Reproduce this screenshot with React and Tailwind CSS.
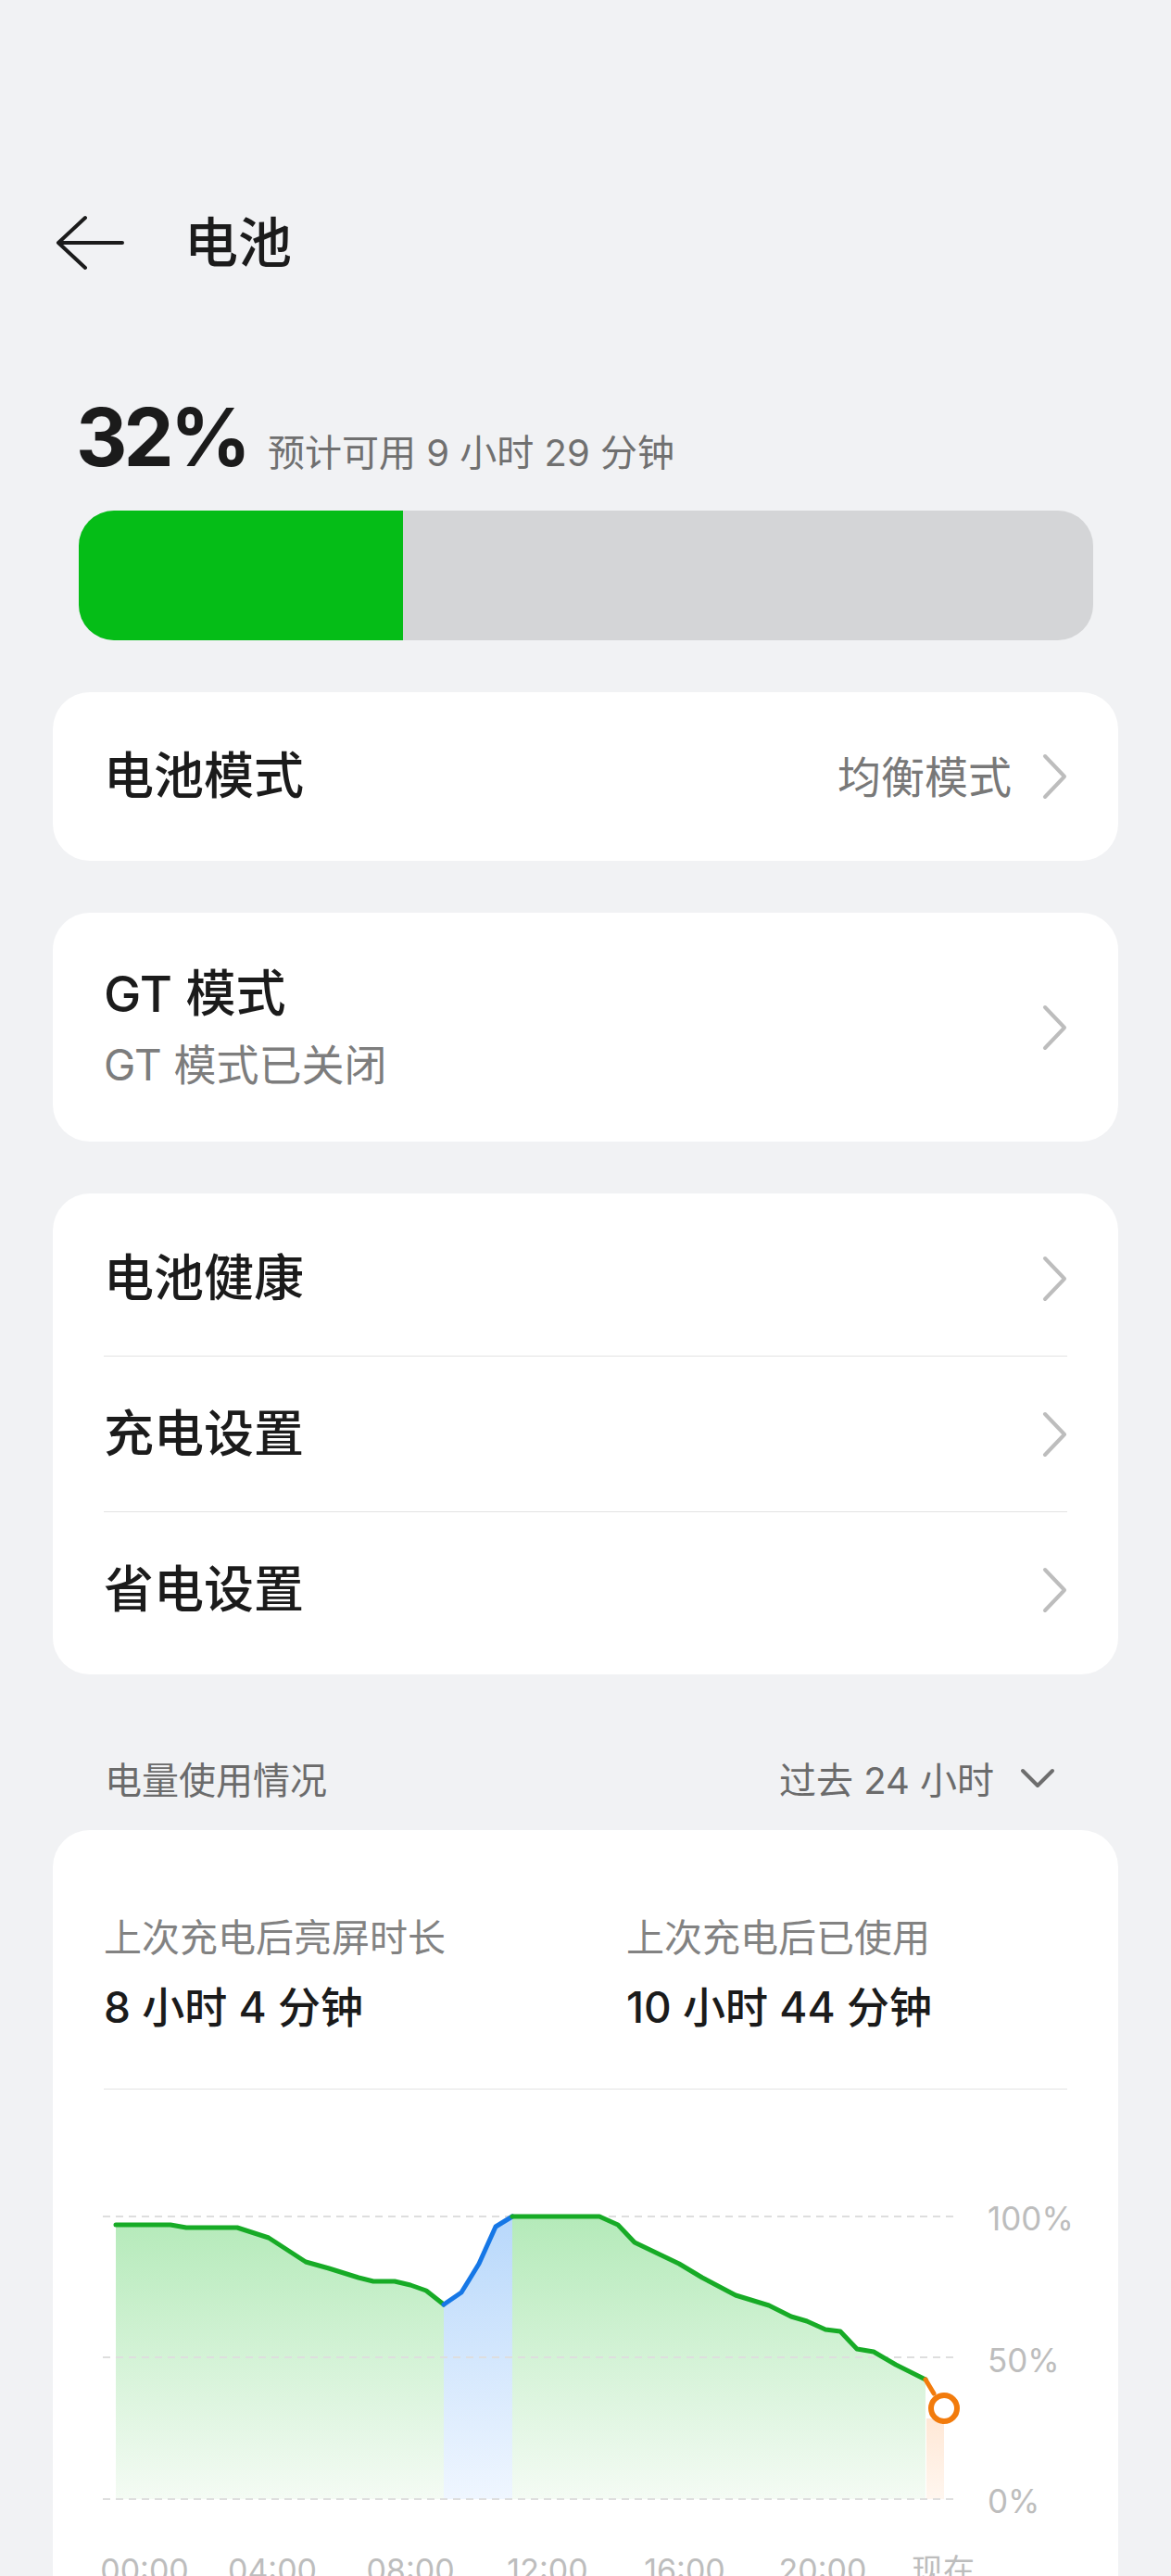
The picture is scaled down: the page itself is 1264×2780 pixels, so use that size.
import React from 'react'

const FONT = "font-['Inter','Noto_Sans_CJK_SC',sans-serif]"

const green1 = [
  [125, 2401], [184, 2401], [201, 2404], [256, 2404], [290, 2415], [330, 2441],
  [355, 2448], [387, 2458], [403, 2462], [426, 2462], [443, 2466], [460, 2472], [479, 2487],
]
const blue = [[479, 2487], [498, 2474], [517, 2443], [535, 2403], [553, 2392]]
const green2 = [
  [553, 2392], [647, 2392], [667, 2401], [685, 2420], [733, 2443], [758, 2458],
  [794, 2477], [830, 2488], [854, 2500], [871, 2505], [891, 2514], [907, 2516],
  [925, 2535], [943, 2538], [967, 2552], [999, 2568],
]

const BASE = 2697
const line = (pts) => pts.map((p) => p.join(',')).join(' ')
const area = (pts) =>
  line([[pts[0][0], BASE], ...pts, [pts[pts.length - 1][0], BASE]])

function Chevron() {
  return (
    <svg width="28" height="50" viewBox="0 0 28 50" fill="none">
      <path d="M4 3 L25 25 L4 47" stroke="#bdbdbd" strokeWidth="4" strokeLinecap="round" strokeLinejoin="round" />
    </svg>
  )
}

function Row({ label }) {
  return (
    <div className="h-[167px] flex items-center justify-between">
      <span className="text-[54px] leading-none font-medium text-[#1b1b1b]">{label}</span>
      <Chevron />
    </div>
  )
}

function Chart() {
  const xLabels = [
    ['00:00', 156], ['04:00', 294], ['08:00', 443], ['12:00', 591],
    ['16:00', 739], ['20:00', 888], ['现在', 1018],
  ]
  return (
    <svg width="1150" height="545" viewBox="57 2255 1150 545" className="block">
      <defs>
        <linearGradient id="g" x1="0" y1="2392" x2="0" y2="2697" gradientUnits="userSpaceOnUse">
          <stop offset="0" stopColor="#b4eab9" />
          <stop offset="1" stopColor="#f4fbf4" />
        </linearGradient>
        <linearGradient id="b" x1="0" y1="2392" x2="0" y2="2697" gradientUnits="userSpaceOnUse">
          <stop offset="0" stopColor="#b8d8fb" />
          <stop offset="1" stopColor="#eff6ff" />
        </linearGradient>
        <linearGradient id="o" x1="0" y1="2610" x2="0" y2="2697" gradientUnits="userSpaceOnUse">
          <stop offset="0" stopColor="#ffe8d6" />
          <stop offset="1" stopColor="#fff6ef" />
        </linearGradient>
      </defs>

      <polygon points={area(green1)} fill="url(#g)" />
      <polygon points={area(blue)} fill="url(#b)" />
      <polygon points={area(green2)} fill="url(#g)" />
      <rect x="1000" y="2610" width="19" height="87" fill="url(#o)" />

      {[2392, 2544, 2697].map((y) => (
        <line key={y} x1="111" y1={y} x2="1032" y2={y} stroke="#dedede" strokeWidth="2" strokeDasharray="8 6" />
      ))}

      <polyline points={line(green1)} fill="none" stroke="#17ab26" strokeWidth="5" strokeLinejoin="round" strokeLinecap="round" />
      <polyline points={line(blue)} fill="none" stroke="#1677e6" strokeWidth="5" strokeLinejoin="round" strokeLinecap="round" />
      <polyline points={line(green2)} fill="none" stroke="#17ab26" strokeWidth="5" strokeLinejoin="round" strokeLinecap="round" />
      <polyline points="999,2568 1008,2583" fill="none" stroke="#f27b0c" strokeWidth="5" strokeLinecap="round" />
      <circle cx="1019" cy="2599" r="14" fill="#fff" stroke="#f27b0c" strokeWidth="6" />

      <g fill="#bdbdbd" fontSize="35" fontFamily="Inter, 'Noto Sans CJK SC', sans-serif">
        <text x="1066" y="2407">100%</text>
        <text x="1066" y="2560">50%</text>
        <text x="1066" y="2712">0%</text>
      </g>
      <g fill="#bdbdbd" fontSize="34" fontFamily="Inter, 'Noto Sans CJK SC', sans-serif" textAnchor="middle">
        {xLabels.map(([t, x]) => (
          <text key={t} x={x} y="2786">{t}</text>
        ))}
      </g>
    </svg>
  )
}

export default function App() {
  return (
    <div className={`${FONT} h-[2780px] overflow-hidden bg-[#f1f2f4] pt-[202px]`}>
      {/* header */}
      <div className="h-[120px] flex items-center pl-[60px]">
        <svg width="76" height="60" viewBox="0 0 76 60" fill="none">
          <path d="M32 3 L3 30 L32 57 M3 30 L72 30" stroke="#1b1b1b" strokeWidth="4" strokeLinecap="round" strokeLinejoin="round" />
        </svg>
        <h1 className="ml-[63px] text-[58px] leading-none font-medium text-[#1b1b1b]">电池</h1>
      </div>

      {/* summary */}
      <div className="mt-[107px] h-[86px] flex items-baseline pl-[82px]">
        <span className="text-[86px] leading-none font-bold tracking-[-4px] text-[#1b1b1b]">32%</span>
        <span className="ml-[22px] text-[40px] leading-none text-[#707070]">预计可用 9 小时 29 分钟</span>
      </div>

      <div className="mt-[36px] ml-[85px] w-[1095px] h-[140px] rounded-[38px] bg-[#d4d5d7] overflow-hidden">
        <div className="h-full w-[32%] bg-[#05bd17]" />
      </div>

      {/* battery mode */}
      <div className="mt-[56px] mx-[57px] h-[182px] rounded-[40px] bg-white px-[55px] flex items-center justify-between">
        <span className="text-[54px] leading-none font-medium text-[#1b1b1b]">电池模式</span>
        <div className="flex items-center gap-[32px]">
          <span className="text-[47px] leading-none text-[#787878]">均衡模式</span>
          <Chevron />
        </div>
      </div>

      {/* GT mode */}
      <div className="mt-[56px] mx-[57px] h-[247px] rounded-[40px] bg-white px-[55px] flex items-center justify-between">
        <div className="flex flex-col gap-[16px]">
          <span className="text-[54px] leading-[64px] font-medium text-[#1b1b1b]">GT 模式</span>
          <span className="text-[46px] leading-[56px] text-[#7d7d7d]">GT 模式已关闭</span>
        </div>
        <Chevron />
      </div>

      {/* settings group */}
      <div className="mt-[56px] mx-[57px] rounded-[40px] bg-white px-[55px] py-[8px]">
        <Row label="电池健康" />
        <div className="h-px bg-[#e3e3e3]" />
        <Row label="充电设置" />
        <div className="h-px bg-[#e3e3e3]" />
        <Row label="省电设置" />
      </div>

      {/* usage header */}
      <div className="mt-[70px] mx-[57px] h-[90px] pl-[56px] pr-[67px] flex items-center justify-between">
        <span className="text-[40px] leading-none text-[#6b6b6b]">电量使用情况</span>
        <div className="flex items-center gap-[27px]">
          <span className="text-[40px] leading-none text-[#6b6b6b]">过去 24 小时</span>
          <svg width="40" height="24" viewBox="0 0 40 24" fill="none" className="-mt-[6px]">
            <path d="M4 4 L20 20 L36 4" stroke="#6e6e6e" strokeWidth="4" strokeLinecap="round" strokeLinejoin="round" />
          </svg>
        </div>
      </div>

      {/* usage card */}
      <div className="mt-[8px] mx-[57px] rounded-[40px] bg-white h-[900px]">
        <div className="px-[55px] pt-[90px]">
          <div className="grid grid-cols-[564px_1fr]">
            <div>
              <div className="text-[41px] leading-[52px] text-[#828282]">上次充电后亮屏时长</div>
              <div className="mt-[19px] text-[46px] leading-[60px] font-medium text-[#1b1b1b]">8 小时 4 分钟</div>
            </div>
            <div>
              <div className="text-[41px] leading-[52px] text-[#828282]">上次充电后已使用</div>
              <div className="mt-[19px] text-[46px] leading-[60px] font-medium text-[#1b1b1b]">10 小时 44 分钟</div>
            </div>
          </div>
          <div className="mt-[58px] h-px bg-[#e3e3e3]" />
        </div>
        <Chart />
      </div>
    </div>
  )
}
